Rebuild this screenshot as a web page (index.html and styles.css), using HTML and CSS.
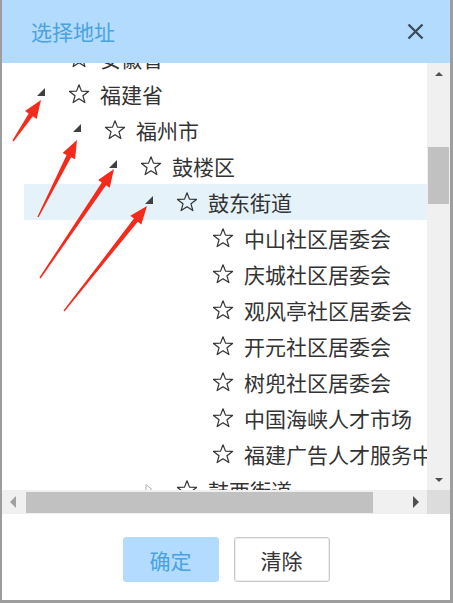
FILE: index.html
```html
<!DOCTYPE html>
<html lang="zh-CN">
<head>
    <meta charset="UTF-8">
    <meta name="viewport" content="width=device-width, initial-scale=1.0">
    <title>选择地址</title>
    <link rel="stylesheet" href="styles.css">
</head>
<body>
    <div class="dialog">
        <div class="dialog-head">
            <span class="dialog-title">选择地址</span>
            <button class="close" type="button">
                <svg width="17" height="17" viewBox="0 0 17 17"><path d="M1.5 1.5 L15.5 15.5 M15.5 1.5 L1.5 15.5" stroke="#3d4b5b" stroke-width="2.4" fill="none"/></svg>
            </button>
        </div>

        <div class="tree-box">
            <div class="tree-view">
                <ul class="tree">
                    <li class="node lvl-0"><span class="toggle closed"></span><span class="star"></span><span class="label">安徽省</span></li>
                    <li class="node lvl-0"><span class="toggle open"></span><span class="star"></span><span class="label">福建省</span></li>
                    <li class="node lvl-1"><span class="toggle open"></span><span class="star"></span><span class="label">福州市</span></li>
                    <li class="node lvl-2"><span class="toggle open"></span><span class="star"></span><span class="label">鼓楼区</span></li>
                    <li class="node lvl-3 cur"><span class="toggle open"></span><span class="star"></span><span class="label">鼓东街道</span></li>
                    <li class="node lvl-4"><span class="toggle"></span><span class="star"></span><span class="label">中山社区居委会</span></li>
                    <li class="node lvl-4"><span class="toggle"></span><span class="star"></span><span class="label">庆城社区居委会</span></li>
                    <li class="node lvl-4"><span class="toggle"></span><span class="star"></span><span class="label">观风亭社区居委会</span></li>
                    <li class="node lvl-4"><span class="toggle"></span><span class="star"></span><span class="label">开元社区居委会</span></li>
                    <li class="node lvl-4"><span class="toggle"></span><span class="star"></span><span class="label">树兜社区居委会</span></li>
                    <li class="node lvl-4"><span class="toggle"></span><span class="star"></span><span class="label">中国海峡人才市场</span></li>
                    <li class="node lvl-4"><span class="toggle"></span><span class="star"></span><span class="label">福建广告人才服务中心</span></li>
                    <li class="node lvl-3"><span class="toggle closed"></span><span class="star"></span><span class="label">鼓西街道</span></li>
                </ul>
            </div>
            <div class="vbar">
                <span class="sb-btn"><i class="arr arr-up"></i></span>
                <div class="vtrack"><div class="vthumb"></div></div>
                <span class="sb-btn"><i class="arr arr-down"></i></span>
            </div>
            <div class="hbar">
                <span class="sb-btn"><i class="arr arr-left"></i></span>
                <div class="htrack"><div class="hthumb"></div></div>
                <span class="sb-btn"><i class="arr arr-right"></i></span>
            </div>
            <div class="corner"></div>
        </div>

        <div class="dialog-foot">
            <button class="btn btn-ok" type="button">确定</button>
            <button class="btn btn-clear" type="button">清除</button>
        </div>
    </div>

    <!-- red annotation arrows on top of the screenshot -->
    <svg class="marks" width="453" height="603" viewBox="0 0 453 603">
        <g fill="#f42b1c">
            <polygon points="13.6,141.4 32.9,116.3 36.6,118.9 41,100 25,111 28.7,113.5 12.4,140.6"/>
            <polygon points="38.6,217.3 71.1,157.2 75.1,159.2 77,140 62.6,152.9 66.6,154.9 37.4,216.7"/>
            <polygon points="40.6,278.4 106,185.3 109.7,187.8 114,169 98.1,180 101.8,182.5 39.4,277.6"/>
            <polygon points="64.5,311.4 137.8,221.7 141.3,224.5 147,206 130.3,215.8 133.9,218.6 63.5,310.6"/>
        </g>
    </svg>
</body>
</html>
```

FILE: styles.css
```css
body {
    margin: 0;
    width: 453px;
    height: 603px;
    position: relative;
    overflow: hidden;
    background-color: #9d9d9d;
    font-family: "Noto Sans CJK SC", sans-serif;
}

.dialog {
    margin-left: 2px;
    width: 448px;
    height: 600px;
    background-color: #fff;
    display: flex;
    flex-direction: column;
}

.dialog-head {
    height: 63px;
    flex: none;
    display: flex;
    align-items: center;
    justify-content: space-between;
    padding: 0 26px 0 29px;
    background-color: #b3dbfd;
}

.dialog-title {
    font-size: 21px;
    line-height: 1;
    color: #4aa2e1;
}

.close {
    border: 0;
    padding: 0;
    background: none;
    display: flex;
}

.tree-box {
    display: grid;
    grid-template-columns: 1fr 23px;
    grid-template-rows: 427px 24px;
}

.tree-view {
    overflow: hidden;
}

.tree {
    list-style: none;
    margin: -23px 0 0;
    padding: 0;
}

.node {
    height: 36px;
    margin-left: 22px;
    display: flex;
    align-items: center;
    white-space: nowrap;
    font-size: 21px;
    color: #333;
}

.lvl-0 { padding-left: 11px; }
.lvl-1 { padding-left: 47px; }
.lvl-2 { padding-left: 83px; }
.lvl-3 { padding-left: 119px; }
.lvl-4 { padding-left: 155px; }

.node.cur {
    background-color: #e5f2f9;
}

.toggle {
    width: 12px;
    height: 12px;
    flex: none;
    margin-top: -2px;
    background-repeat: no-repeat;
}

.toggle.open {
    background-image: url("data:image/svg+xml,%3Csvg xmlns='http://www.w3.org/2000/svg' width='12' height='12'%3E%3Cpolygon points='10,1 10,9 2,9' fill='%23404040'/%3E%3C/svg%3E");
}

.toggle.closed {
    background-image: url("data:image/svg+xml,%3Csvg xmlns='http://www.w3.org/2000/svg' width='12' height='12'%3E%3Cpolygon points='3,1.5 8.5,6 3,10.5' fill='none' stroke='%23b0b0b0'/%3E%3C/svg%3E");
}

.star {
    width: 22px;
    height: 20px;
    flex: none;
    margin-left: 21px;
    background-image: url("data:image/svg+xml,%3Csvg xmlns='http://www.w3.org/2000/svg' width='22' height='20'%3E%3Cpolygon points='11,0.8 13.47,7.1 20.51,7.41 14.99,11.8 16.88,18.59 11,14.7 5.12,18.59 7.01,11.8 1.49,7.41 8.53,7.1' fill='none' stroke='%23333' stroke-width='1.2' stroke-linejoin='round'/%3E%3C/svg%3E");
}

.label {
    margin-left: 10px;
    line-height: 1;
}

/* fake scrollbars */
.vbar,
.hbar {
    background-color: #f0f0f0;
    display: flex;
}

.vbar {
    flex-direction: column;
}

.sb-btn {
    flex: none;
    width: 22px;
    height: 21px;
    display: flex;
    align-items: center;
    justify-content: center;
}

.vbar .sb-btn {
    width: 23px;
}

.hbar .sb-btn {
    height: 24px;
}

.vtrack,
.htrack {
    flex: 1;
}

.vthumb {
    margin: 63px 1px 0 1px;
    height: 57px;
    background-color: #c1c1c1;
}

.hthumb {
    margin: 2px 0 0 2px;
    width: 347px;
    height: 21px;
    background-color: #c1c1c1;
}

.corner {
    background-color: #dcdcdc;
}

.arr {
    width: 0;
    height: 0;
    border: 4px solid transparent;
}

.arr-up { border-bottom-color: #505050; border-top-width: 0; }
.arr-down { border-top-color: #505050; border-bottom-width: 0; }
.arr-left { border-right-color: #a0a0a0; border-left-width: 0; border-top-width: 6px; border-bottom-width: 6px; border-right-width: 6px; }
.arr-right { border-left-color: #505050; border-right-width: 0; border-top-width: 6px; border-bottom-width: 6px; border-left-width: 6px; }

.dialog-foot {
    flex: 1;
    display: flex;
    justify-content: center;
    align-items: flex-start;
    gap: 15px;
    padding-top: 23px;
}

.btn {
    width: 96px;
    height: 45px;
    border-radius: 3px;
    font-family: inherit;
    font-size: 21px;
    padding: 0;
}

.btn-ok {
    border: 1px solid #b3dbfd;
    background-color: #b3dbfd;
    color: #4aa2e1;
}

.btn-clear {
    border: 1px solid #c9c9c9;
    box-shadow: inset 0 0 0 1px #efefef;
    background-color: #fff;
    color: #333;
}

.marks {
    position: absolute;
    top: 0;
    left: 0;
    pointer-events: none;
}
```
